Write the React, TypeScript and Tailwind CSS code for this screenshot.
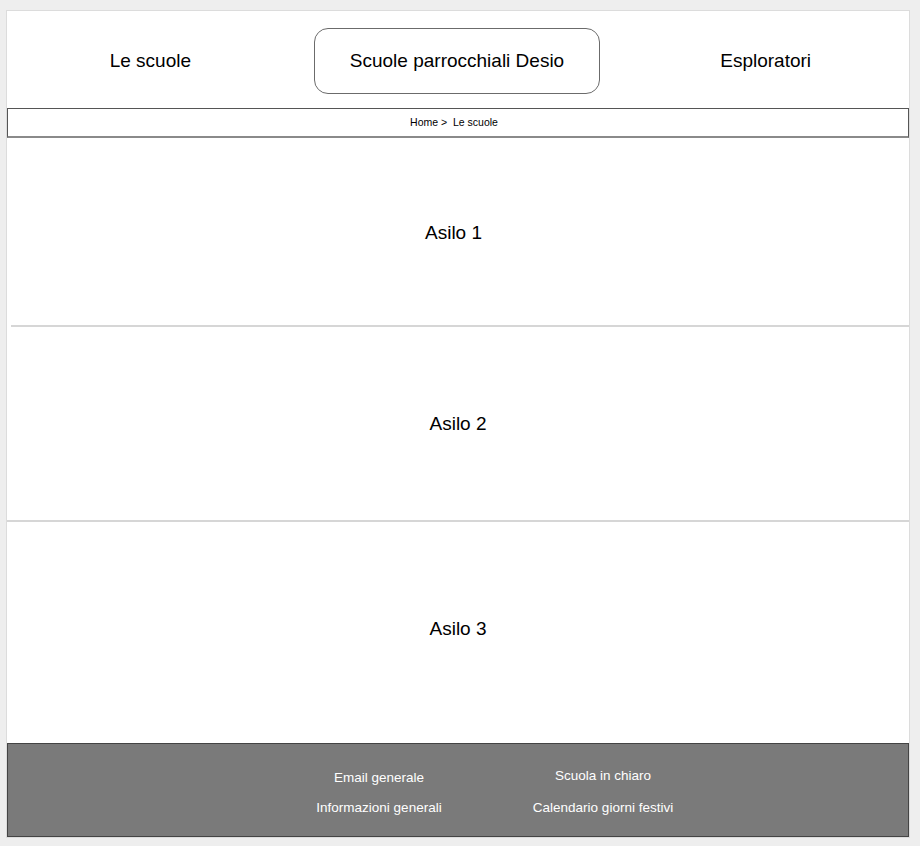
import React from 'react';

const sans = { fontFamily: '"Liberation Sans", Arial, sans-serif' };

function Section({ label, height, line, pad }: { label: string; height: string; line?: 'inset' | 'full'; pad?: string }) {
  return (
    <div className="flex flex-col">
      <div className={`flex items-center justify-center ${height} ${pad ?? ''}`}>
        <span className="text-[19px] text-black">{label}</span>
      </div>
      {line === 'inset' && <div className="ml-[4px] h-[2px] bg-[#d6d6d6]" />}
      {line === 'full' && <div className="h-[2px] bg-[#d6d6d6]" />}
    </div>
  );
}

export default function App() {
  return (
    <div className="min-h-[846px] bg-[#eeeeee] pt-[10px]" style={sans}>
      <div className="ml-[6px] w-[904px] border border-[#dcdcdc] bg-white">
        {/* top nav */}
        <div className="flex h-[97px] items-center pt-[3px]">
          <div className="flex w-[288px] justify-center">
            <span className="text-[19px] text-black">Le scuole</span>
          </div>
          <div className="ml-[20px] flex h-[66px] w-[288px] items-center justify-center rounded-[14px] border border-[#6b6b6b]">
            <span className="text-[19px] text-black">Scuole parrocchiali Desio</span>
          </div>
          <div className="ml-[22px] flex w-[288px] justify-center">
            <span className="text-[19px] text-black">Esploratori</span>
          </div>
        </div>

        {/* breadcrumb */}
        <div className="flex h-[30px] items-center justify-center border border-[#555555] border-b-[#8a8a8a] border-b-2">
          <span className="pr-[8px] text-[10.5px] text-black">Home &gt;&nbsp; Le scuole</span>
        </div>

        {/* content */}
        <Section label="Asilo 1" height="h-[187px]" line="inset" pad="pt-[4px] pr-[9px]" />
        <Section label="Asilo 2" height="h-[193px]" line="full" pad="pt-[2px]" />
        <Section label="Asilo 3" height="h-[221px]" pad="pb-[6px]" />

        {/* footer */}
        <div className="flex h-[94px] border border-[#444444] bg-[#7a7a7a] pt-[26px] text-white">
          <div className="ml-[271px] flex w-[200px] flex-col items-center gap-[14px]">
            <span className="text-[13.5px] leading-[16px]">Email generale</span>
            <span className="text-[13.5px] leading-[16px]">Informazioni generali</span>
          </div>
          <div className="ml-[24px] -mt-[2px] flex w-[200px] flex-col items-center gap-[16px]">
            <span className="text-[13.5px] leading-[16px]">Scuola in chiaro</span>
            <span className="text-[13.5px] leading-[16px]">Calendario giorni festivi</span>
          </div>
        </div>
      </div>
    </div>
  );
}
